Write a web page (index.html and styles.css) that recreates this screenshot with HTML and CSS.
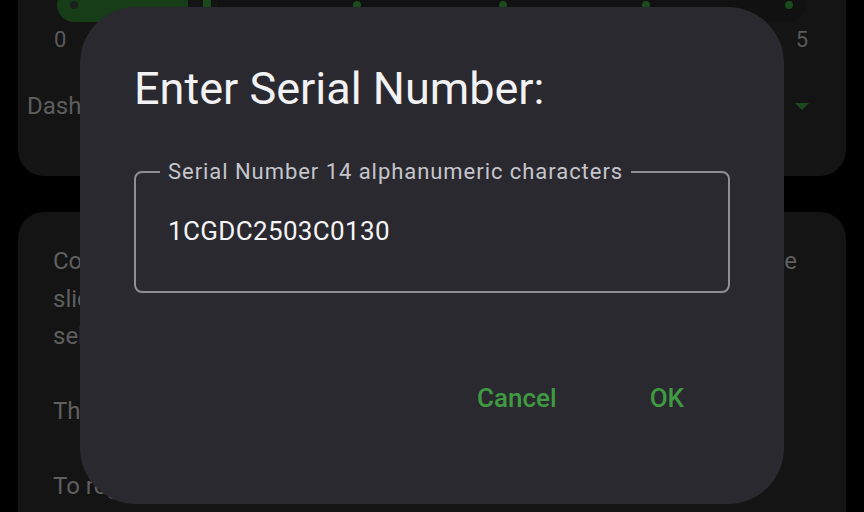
FILE: index.html
```html
<!DOCTYPE html>
<html lang="en">
<head>
<meta charset="utf-8">
<title>Enter Serial Number</title>
<link rel="stylesheet" href="styles.css">
</head>
<body>
<div class="screen">
  <section class="card card-top">
    <div class="slider">
      <div class="track-active"><span class="stop-dot"></span></div>
      <div class="track-inactive"></div>
      <div class="thumb"></div>
      <span class="tick" style="left:300px"></span>
      <span class="tick" style="left:446px"></span>
      <span class="tick" style="left:589px"></span>
      <span class="tick" style="left:732px"></span>
    </div>
    <div class="slider-labels"><span>0</span><span>5</span></div>
    <div class="dropdown"><span>Dashboard</span><span class="caret"></span></div>
  </section>
  <section class="card card-info">
    <p><span class="line-full">Connect the device and adjust the slider to change the value of the</span>slider position to update the<br>selected setting.</p>
    <p>The serial number is printed on the label.</p>
    <p>To register the device, enter the serial number.</p>
  </section>

  <div class="dialog" role="dialog">
    <h1 class="dialog-title">Enter Serial Number:</h1>
    <fieldset class="field">
      <legend>Serial Number 14 alphanumeric characters</legend>
      <div class="field-value">1CGDC2503C0130</div>
    </fieldset>
    <div class="actions">
      <button class="text-btn">Cancel</button>
      <button class="text-btn">OK</button>
    </div>
  </div>
</div>
</body>
</html>
```

FILE: styles.css
```css
* { box-sizing: border-box; }
html, body {
  margin: 0;
  padding: 0;
  background: #000;
  width: 864px;
  height: 512px;
  overflow: hidden;
  font-family: Roboto, "Noto Sans", "Liberation Sans", sans-serif;
}
.screen {
  position: relative;
  width: 864px;
  height: 512px;
  overflow: hidden;
  padding: 0 18px;
}
.card {
  background: #141414;
  border-radius: 26px;
}
.card-top {
  margin-top: -40px;
  padding: 28px 38px 57px 0;
  height: 216px;
}
.slider {
  position: relative;
  margin-left: 39px;
  width: 749px;
  height: 34px;
}
.track-active {
  position: absolute;
  left: 0;
  top: 0;
  width: 131px;
  height: 34px;
  background: #163d18;
  border-radius: 17px 3px 3px 17px;
}
.stop-dot {
  position: absolute;
  left: 13px;
  top: 13px;
  width: 8px;
  height: 8px;
  border-radius: 50%;
  background: #1c1f1c;
}
.track-inactive {
  position: absolute;
  left: 160px;
  right: 0;
  top: 0;
  height: 34px;
  background: #111111;
  border-radius: 3px 17px 17px 3px;
}
.thumb {
  position: absolute;
  left: 146px;
  top: -6px;
  width: 8px;
  height: 46px;
  border-radius: 4px;
  background: #1a4a1c;
}
.tick {
  position: absolute;
  top: 13px;
  width: 8px;
  height: 8px;
  margin-left: -4px;
  border-radius: 50%;
  background: #1b4a1d;
}
.slider-labels {
  display: flex;
  justify-content: space-between;
  margin: 5px 0 0 36px;
  font-size: 22px;
  line-height: 26px;
  color: #5a5a5a;
}
.dropdown {
  display: flex;
  align-items: center;
  justify-content: space-between;
  margin: 39px 0 0 9px;
  font-size: 24px;
  line-height: 28px;
  color: #5e5e5e;
}
.caret {
  width: 0;
  height: 0;
  border-left: 7px solid transparent;
  border-right: 7px solid transparent;
  border-top: 7px solid #1b4a1d;
  margin-right: -1px;
}
.card-info {
  margin-top: 36px;
  padding: 31px 49px 40px 35px;
  height: 340px;
  color: #5f5f5f;
  font-size: 24px;
  line-height: 37.5px;
  overflow: hidden;
}
.card-info p {
  margin: 0 0 37.5px 0;
  white-space: nowrap;
}
.line-full {
  display: block;
  text-align: justify;
  text-align-last: justify;
}

.dialog {
  position: absolute;
  left: 80px;
  top: 7px;
  width: 704px;
  height: 497px;
  background: #29292f;
  border-radius: 56px;
  padding: 55px 54px 0 54px;
  display: flex;
  flex-direction: column;
}
.dialog-title {
  margin: 0;
  font-weight: 400;
  font-size: 45px;
  line-height: 54px;
  color: #f2f2f4;
}
.field {
  margin: 43px 0 0 0;
  padding: 0 0 45px 0;
  border: 2px solid #8e8e94;
  border-radius: 8px;
  min-width: 0;
}
.field legend {
  margin-left: 24px;
  padding: 0 8px;
  font-size: 22px;
  line-height: 26px;
  color: #c5c5cb;
  letter-spacing: 0.95px;
}
.field-value {
  margin-top: 31px;
  padding-left: 32px;
  font-size: 26px;
  line-height: 30px;
  color: #f4f4f6;
  letter-spacing: 0.35px;
}
.actions {
  display: flex;
  justify-content: flex-end;
  gap: 45px;
  margin-top: 80px;
  padding-right: 22px;
}
.text-btn {
  background: none;
  border: 0;
  padding: 10px 24px;
  font-family: inherit;
  font-size: 26px;
  line-height: 30px;
  font-weight: 500;
  color: #3f9a42;
  cursor: pointer;
}
```
